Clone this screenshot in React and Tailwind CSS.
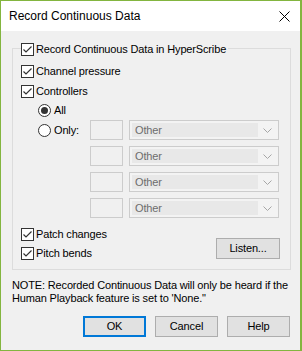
import React from 'react';

const font = { fontFamily: '"Liberation Sans", Arial, sans-serif' };

function Check({ checked = true }) {
  return (
    <span className="inline-flex w-[13px] h-[13px] shrink-0 border border-[#333333] bg-white items-center justify-center">
      {checked && (
        <svg width="11" height="11" viewBox="0 0 11 11">
          <polyline points="1.5,5.5 4,8 9.5,2.5" fill="none" stroke="#333333" strokeWidth="1.2" />
        </svg>
      )}
    </span>
  );
}

function Radio({ checked }) {
  return (
    <span className="inline-flex w-[13px] h-[13px] shrink-0 rounded-full border border-[#333333] bg-white items-center justify-center">
      {checked && <span className="block w-[7px] h-[7px] rounded-full bg-[#333333]" />}
    </span>
  );
}

function CheckRow({ label, h = 'h-[20px]' }) {
  return (
    <div className={`flex items-center gap-[2px] ${h}`}>
      <Check />
      <span>{label}</span>
    </div>
  );
}

function ControllerRow() {
  return (
    <div className="flex items-center gap-[6px] h-[20px]">
      <div className="w-[33px] h-[20px] border border-[#cccccc] bg-[#f0f0f0]" />
      <div className="w-[150px] h-[20px] border border-[#cccccc] bg-[#f3f3f3] p-[2px] flex items-center">
        <div className="flex-1 h-full bg-[#e8e8e8] text-[#6d6d6d] pl-[3px] flex items-center">Other</div>
        <div className="w-[18px] flex items-center justify-center">
          <svg width="9" height="5" viewBox="0 0 9 5">
            <polyline points="0.5,0.5 4.5,4.5 8.5,0.5" fill="none" stroke="#a6a6a6" strokeWidth="1" />
          </svg>
        </div>
      </div>
    </div>
  );
}

function Button({ children, primary }) {
  return (
    <button
      className={`w-[63px] h-[21px] bg-[#e1e1e1] text-black flex items-center justify-center ${
        primary ? 'border-2 border-[#0078d7]' : 'border border-[#adadad]'
      }`}
    >
      {children}
    </button>
  );
}

export default function App() {
  return (
    <div
      className="w-[302px] h-[351px] border border-r-2 border-[#83b53f] bg-[#f0f0f0] flex flex-col text-[11px] tracking-[-0.15px] text-black"
      style={font}
    >
      <div className="h-[30px] bg-white flex items-center justify-between pl-[8px] pr-[8px]">
        <span className="text-[12px] tracking-normal">Record Continuous Data</span>
        <svg width="11" height="11" viewBox="0 0 11 11" className="mr-[2px]">
          <path d="M0.5 0.5 L10.5 10.5 M10.5 0.5 L0.5 10.5" stroke="#000" strokeWidth="1" />
        </svg>
      </div>

      <div className="flex-1 flex flex-col">
        <div className="mt-[17px] ml-[11px] w-[279px] border border-[#dcdcdc] pl-[8px] pr-[10px] pb-[7px] flex flex-col">
          <div className="-mt-[7px] h-[15px] flex">
            <div className="flex items-center gap-[2px] bg-[#f0f0f0] pr-[2px]">
              <Check />
              <span>Record Continuous Data in HyperScribe</span>
            </div>
          </div>
          <div className="mt-[4px]">
            <CheckRow label="Channel pressure" />
            <CheckRow label="Controllers" />
          </div>
          <div className="pl-[17px]">
            <div className="flex items-center gap-[3px] h-[19px]">
              <Radio checked />
              <span>All</span>
            </div>
            <div className="flex">
              <div className="w-[52px] h-[20px] flex items-center gap-[3px]">
                <Radio />
                <span>Only:</span>
              </div>
              <div className="flex flex-col gap-[6px]">
                <ControllerRow />
                <ControllerRow />
                <ControllerRow />
                <ControllerRow />
              </div>
            </div>
          </div>
          <div className="mt-[6px] flex items-end justify-between">
            <div>
              <CheckRow label="Patch changes" />
              <CheckRow label="Pitch bends" h="h-[18px]" />
            </div>
            <button className="w-[64px] h-[21px] mb-[3px] border border-[#adadad] bg-[#e1e1e1] flex items-center justify-center">
              Listen...
            </button>
          </div>
        </div>

        <p className="mt-[9px] ml-[11px] leading-[13px] whitespace-nowrap">
          NOTE: Recorded Continuous Data will only be heard if the
          <br />
          Human Playback feature is set to 'None."
        </p>

        <div className="mt-[11px] pr-[10px] flex justify-end gap-[9px]">
          <Button primary>OK</Button>
          <Button>Cancel</Button>
          <Button>Help</Button>
        </div>
      </div>
    </div>
  );
}
